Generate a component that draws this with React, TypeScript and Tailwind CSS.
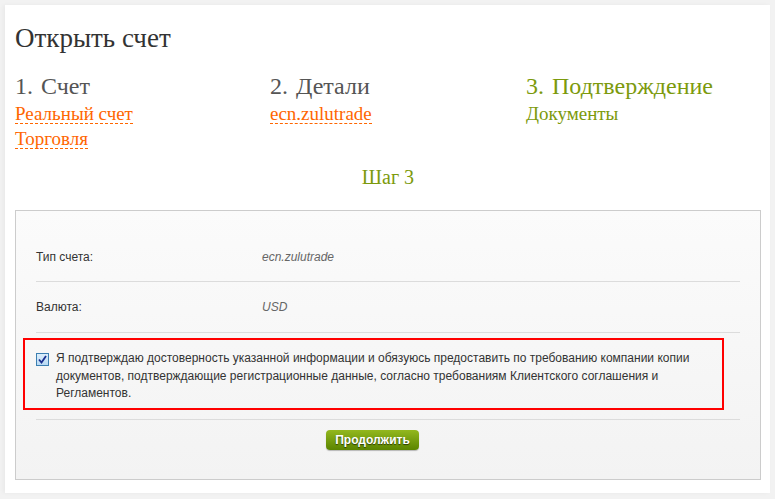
export default function App() {
  const serif = { fontFamily: '"Liberation Serif", "DejaVu Serif", serif' };
  const sans = { fontFamily: '"Liberation Sans", Arial, sans-serif' };

  const steps = [
    { n: '1.', title: 'Счет', links: ['Реальный счет', 'Торговля'], done: true },
    { n: '2.', title: 'Детали', links: ['ecn.zulutrade'], done: true },
    { n: '3.', title: 'Подтверждение', links: ['Документы'], done: false },
  ];

  return (
    <div className="w-[775px] h-[499px] bg-[#f2f2f2] pt-[5px] pl-[5px] pr-[5px] overflow-hidden" style={sans}>
      <div className="bg-white h-[488px] pl-[10px] pr-[9px] pt-[17px] shadow-[-2px_0_4px_rgba(0,0,0,0.04)]">
        <h1 className="text-[27px] leading-[32px] text-[#333]" style={serif}>Открыть счет</h1>

        <div className="grid grid-cols-[255px_256px_1fr] mt-[18px]" style={serif}>
          {steps.map((step) => (
            <div key={step.n}>
              <div className={step.done ? 'text-[24px] leading-[28px] text-[#555]' : 'text-[24px] leading-[28px] text-[#7c9a0c]'}>
                {step.n} <span className="ml-[2px]">{step.title}</span>
              </div>
              <div className="flex flex-col items-start text-[19px] mt-[4px]">
                {step.links.map((link, i) =>
                  step.done ? (
                    <span key={i} className="text-[#ff6600] border-b border-dashed border-[#ff6600] leading-[19px] mb-[5px]">
                      {link}
                    </span>
                  ) : (
                    <span key={i} className="text-[#7c9a0c] leading-[19px]">
                      {link}
                    </span>
                  )
                )}
              </div>
            </div>
          ))}
        </div>

        <div className="text-center text-[20px] leading-[24px] text-[#7c9a0c] mt-[11px]" style={serif}>Шаг 3</div>

        <div className="mt-[21px] border border-[#cccccc] bg-gradient-to-b from-[#fbfbfb] to-[#f3f3f3] h-[270px] px-[20px] pt-[22px]">
          <div className="flex items-center h-[49px] border-b border-[#dcdcdc] text-[12px] text-[#333]">
            <span className="w-[226px]">Тип счета:</span>
            <span className="italic text-[#666]">ecn.zulutrade</span>
          </div>
          <div className="flex items-center h-[51px] border-b border-[#dcdcdc] text-[12px] text-[#333]">
            <span className="w-[226px]">Валюта:</span>
            <span className="italic text-[#666]">USD</span>
          </div>
          <div className="pt-[5px] pb-[9px] border-b border-[#dcdcdc]">
            <div className="-ml-[13px] mr-[16px] border-2 border-[#ff0000] pl-[11px] pr-[10px] pt-[10px] pb-[5px] flex items-start gap-[7px]">
              <span className="mt-[3px] shrink-0 w-[13px] h-[13px] border border-[#3c7fb1] bg-gradient-to-b from-[#dceefb] to-[#b9daf4] flex items-center justify-center">
                <svg width="9" height="9" viewBox="0 0 9 9">
                  <path d="M1 4.5 L3.5 7.5 L8 1" fill="none" stroke="#1b2f8f" strokeWidth="1.8" />
                </svg>
              </span>
              <p className="text-[12px] leading-[17.5px] text-[#333]">
                Я подтверждаю достоверность указанной информации и обязуюсь предоставить по требованию компании копии документов, подтверждающие регистрационные данные, согласно требованиям Клиентского соглашения и Регламентов.
              </p>
            </div>
          </div>
          <div className="flex pt-[10px] pl-[290px]">
            <button className="w-[93px] h-[20px] rounded-[4px] bg-gradient-to-b from-[#93b81e] to-[#5b8500] text-white text-[12px] font-bold leading-[20px] shadow-[0_1px_1px_rgba(0,0,0,0.25)] [text-shadow:0_1px_1px_rgba(0,0,0,0.6)]">
              Продолжить
            </button>
          </div>
        </div>
      </div>
    </div>
  );
}
